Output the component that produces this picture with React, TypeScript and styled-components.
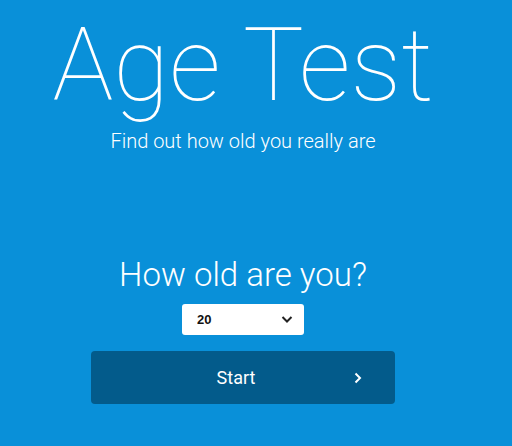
import React, { useState } from "react";
import styled, { createGlobalStyle } from "styled-components";

const GlobalStyle = createGlobalStyle`
  html, body {
    margin: 0;
    padding: 0;
    background: #0990d9;
    font-family: Roboto, "Liberation Sans", sans-serif;
    color: #ffffff;
  }
`;

const Page = styled.div`
  width: 486px;
  height: 446px;
  display: flex;
  flex-direction: column;
  align-items: center;
  overflow: hidden;
`;

const Title = styled.h1`
  margin: 5px 0 0;
  font-weight: 100;
  font-size: 102px;
  line-height: 120px;
`;

const Subtitle = styled.p`
  margin: 4px 0 0;
  font-weight: 300;
  font-size: 20px;
  line-height: 24px;
`;

const Question = styled.h2`
  margin: 102px 0 0;
  font-weight: 300;
  font-size: 33px;
  line-height: 40px;
`;

const SelectWrap = styled.div`
  position: relative;
  margin-top: 9px;
  width: 122px;
  height: 31px;
  background: #ffffff;
  border-radius: 3px;
`;

const Select = styled.select`
  appearance: none;
  width: 100%;
  height: 100%;
  border: none;
  background: transparent;
  padding: 0 0 0 15px;
  font-family: "Liberation Sans", Arial, sans-serif;
  font-weight: bold;
  font-size: 13px;
  color: #111111;
  outline: none;
`;

const Chevron = styled.svg`
  position: absolute;
  right: 11px;
  top: 10px;
  pointer-events: none;
`;

const StartButton = styled.button`
  margin-top: 16px;
  width: 304px;
  height: 53px;
  border: none;
  border-radius: 4px;
  background: #035b8b;
  color: #ffffff;
  font-family: Roboto, "Liberation Sans", sans-serif;
  font-weight: 400;
  font-size: 18px;
  display: grid;
  grid-template-columns: 1fr auto 1fr;
  align-items: center;
  padding: 0 14px 0 0;
  cursor: pointer;
`;

const Label = styled.span`
  grid-column: 2;
`;

const Arrow = styled.svg`
  grid-column: 3;
  justify-self: end;
  margin-right: 18px;
`;

const ages = Array.from({ length: 100 }, (_, i) => i + 1);

const App: React.FC = () => {
  const [age, setAge] = useState(20);

  return (
    <>
      <GlobalStyle />
      <Page>
        <Title>Age Test</Title>
        <Subtitle>Find out how old you really are</Subtitle>
        <Question>How old are you?</Question>
        <SelectWrap>
          <Select value={age} onChange={(e) => setAge(Number(e.target.value))}>
            {ages.map((a) => (
              <option key={a} value={a}>
                {a}
              </option>
            ))}
          </Select>
          <Chevron width="12" height="10" viewBox="0 0 12 10">
            <path d="M1.5 3 L6 7.5 L10.5 3" fill="none" stroke="#222" strokeWidth="2" />
          </Chevron>
        </SelectWrap>
        <StartButton>
          <Label>Start</Label>
          <Arrow width="10" height="14" viewBox="0 0 10 14">
            <path d="M2.5 2.5 L7 7 L2.5 11.5" fill="none" stroke="#fff" strokeWidth="2" />
          </Arrow>
        </StartButton>
      </Page>
    </>
  );
};

export default App;
